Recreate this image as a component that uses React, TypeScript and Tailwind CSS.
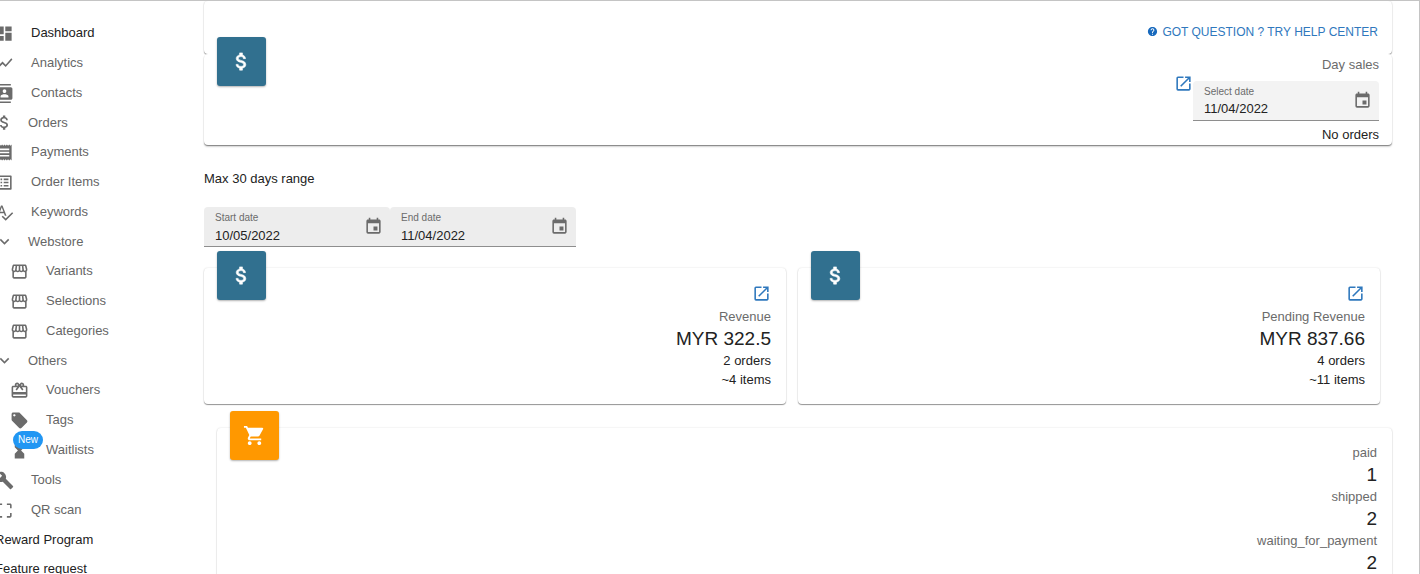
import { useState } from 'react'
import type { ReactNode } from 'react'
import type { IconType } from 'react-icons'
import {
  MdAttachMoney,
  MdBuild,
  MdCardGiftcard,
  MdContacts,
  MdCropFree,
  MdDashboard,
  MdEvent,
  MdExpandMore,
  MdHelp,
  MdHourglassFull,
  MdLaunch,
  MdListAlt,
  MdLocalOffer,
  MdOutlineStorefront,
  MdReceipt,
  MdShoppingCart,
  MdShowChart,
  MdSpellcheck
} from 'react-icons/md'

interface NavItem {
  label: string
  icon?: IconType
  kind?: 'group' | 'child' | 'text'
  active?: boolean
  badge?: string
}

const NAV_ITEMS: NavItem[] = [
  { label: 'Dashboard', icon: MdDashboard, active: true },
  { label: 'Analytics', icon: MdShowChart },
  { label: 'Contacts', icon: MdContacts },
  { label: 'Orders', icon: MdAttachMoney, kind: 'group' },
  { label: 'Payments', icon: MdReceipt },
  { label: 'Order Items', icon: MdListAlt },
  { label: 'Keywords', icon: MdSpellcheck },
  { label: 'Webstore', icon: MdExpandMore, kind: 'group' },
  { label: 'Variants', icon: MdOutlineStorefront, kind: 'child' },
  { label: 'Selections', icon: MdOutlineStorefront, kind: 'child' },
  { label: 'Categories', icon: MdOutlineStorefront, kind: 'child' },
  { label: 'Others', icon: MdExpandMore, kind: 'group' },
  { label: 'Vouchers', icon: MdCardGiftcard, kind: 'child' },
  { label: 'Tags', icon: MdLocalOffer, kind: 'child' },
  { label: 'Waitlists', icon: MdHourglassFull, kind: 'child', badge: 'New' },
  { label: 'Tools', icon: MdBuild },
  { label: 'QR scan', icon: MdCropFree },
  { label: 'Reward Program', kind: 'text' },
  { label: 'Feature request', kind: 'text' }
]

const ORDER_STATUS = [
  { label: 'paid', count: 1 },
  { label: 'shipped', count: 2 },
  { label: 'waiting_for_payment', count: 2 }
]

const ROW_STYLES = {
  item: 'h-[30px] gap-[17px] text-[#666]',
  group: 'h-[29px] gap-[14px] text-[#666]',
  child: 'h-[30px] gap-[17px] pl-[15px] text-[#666]',
  text: 'h-[29px] text-[#222]'
}

const CARD = 'rounded bg-white shadow-[0_1px_1px_rgba(0,0,0,0.4),0_0_2px_rgba(0,0,0,0.14)]'
// sits right under the help bar, so it casts nothing upwards
const CARD_JOINED = 'rounded bg-white shadow-[0_1px_1px_rgba(0,0,0,0.4),0_2px_2px_rgba(0,0,0,0.14)]'

function NavRow({ item }: { item: NavItem }) {
  const Icon = item.icon
  return (
    <li>
      <a href="#" className={`flex items-center ${ROW_STYLES[item.kind ?? 'item']}`}>
        {Icon && (
          <span className="relative shrink-0">
            <Icon className="size-[19px] text-[#6b6b6b]" />
            {item.badge && (
              <span className="absolute -top-[10px] left-[3px] rounded-full bg-[#2196f3] px-[5px] text-[10px] leading-[18px] text-white">
                {item.badge}
              </span>
            )}
          </span>
        )}
        <span className={item.active ? 'text-[#222]' : ''}>{item.label}</span>
      </a>
    </li>
  )
}

function IconTile({ icon: Icon, className }: { icon: IconType; className: string }) {
  return (
    <div
      className={`-mt-[17px] ml-[13px] flex size-[49px] shrink-0 items-center justify-center rounded-[3px] text-white shadow-[0_1px_2px_rgba(0,0,0,0.3)] ${className}`}
    >
      <Icon className="size-[23px]" />
    </div>
  )
}

function DollarTile() {
  return (
    <IconTile
      icon={MdAttachMoney}
      className="bg-[#31708f] [&_path:last-child]:stroke-white [&_path:last-child]:stroke-[0.6px]"
    />
  )
}

function OpenButton({ label }: { label: string }) {
  return (
    <button type="button" aria-label={label} className="block text-[#2f78bd]">
      <MdLaunch className="size-[19px]" />
    </button>
  )
}

interface DateFieldProps {
  id: string
  label: string
  initial: string
  className: string
}

function DateField({ id, label, initial, className }: DateFieldProps) {
  const [value, setValue] = useState(initial)
  return (
    <div
      className={`flex h-10 w-[186px] items-center rounded-t border-b border-[#8e8e8e] pr-[7px] pl-[11px] text-left ${className}`}
    >
      <div className="min-w-0 flex-1 pt-1">
        <label htmlFor={id} className="block text-[10px] leading-3 text-[#6b6b6b]">
          {label}
        </label>
        <input
          id={id}
          type="text"
          value={value}
          onChange={(e) => setValue(e.target.value)}
          className="mt-px block h-5 w-full bg-transparent text-[13px] text-[#222] outline-none"
        />
      </div>
      <button type="button" aria-label={`Choose ${label.toLowerCase()}`} className="text-[#6b6b6b]">
        <MdEvent className="size-[19px]" />
      </button>
    </div>
  )
}

interface RevenueCardProps {
  title: string
  amount: string
  children: ReactNode
}

function RevenueCard({ title, amount, children }: RevenueCardProps) {
  return (
    <section className={`flex justify-between ${CARD}`}>
      <DollarTile />
      <div className="flex flex-col items-end pt-4 pr-[15px] pb-[15px] text-right">
        <OpenButton label={`Open ${title}`} />
        <h2 className="mt-1 leading-5 text-[#6b6b6b]">{title}</h2>
        <p className="text-[19px] leading-6">{amount}</p>
        {children}
      </div>
    </section>
  )
}

export default function App() {
  return (
    <div className="flex h-screen overflow-hidden border-t border-r border-[#c4c4c4] bg-white font-['Liberation_Sans',Arial,sans-serif] text-[13px] text-[#222]">
      <nav className="-ml-[5px] w-[209px] shrink-0 pt-[17px]">
        <ul>
          {NAV_ITEMS.map((item) => (
            <NavRow key={item.label} item={item} />
          ))}
        </ul>
      </nav>

      <main className="min-w-0 flex-1 pr-[27px]">
        <div className={`flex h-[53px] items-center justify-end pt-2 pr-[14px] ${CARD}`}>
          <a href="#" className="flex items-center gap-1 text-[12px] text-[#2f78bd]">
            <MdHelp className="size-[11px] text-[#1769bd]" />
            GOT QUESTION ? TRY HELP CENTER
          </a>
        </div>

        <section className={`flex justify-between ${CARD_JOINED}`}>
          <DollarTile />
          <div className="pr-[13px] text-right leading-5">
            <h2 className="pt-[2px] leading-[18px] text-[#6b6b6b]">Day sales</h2>
            <div className="flex items-start">
              <OpenButton label="Open day sales" />
              <div className="pt-[7px]">
                <DateField id="day" label="Select date" initial="11/04/2022" className="bg-[#f3f3f3]" />
              </div>
            </div>
            <p className="mt-1">No orders</p>
          </div>
        </section>

        <p className="mt-6 leading-5">Max 30 days range</p>
        <div className="mt-[18px] flex">
          <DateField id="start" label="Start date" initial="10/05/2022" className="bg-[#ededed]" />
          <DateField id="end" label="End date" initial="11/04/2022" className="bg-[#ededed]" />
        </div>

        <div className="mt-[21px] grid grid-cols-2 gap-3 pr-3">
          <RevenueCard title="Revenue" amount="MYR 322.5">
            <p className="leading-[19px]">2 orders</p>
            <p className="leading-[19px]">~4 items</p>
          </RevenueCard>
          <RevenueCard title="Pending Revenue" amount="MYR 837.66">
            <p className="leading-[19px]">4 orders</p>
            <p className="leading-[19px]">~11 items</p>
          </RevenueCard>
        </div>

        <section className={`mt-6 ml-[13px] flex justify-between ${CARD}`}>
          <IconTile icon={MdShoppingCart} className="bg-[#ff9800]" />
          <dl className="pt-[14px] pr-[15px] pb-4 text-right leading-[22px]">
            {ORDER_STATUS.map((status) => (
              <div key={status.label}>
                <dt className="text-[#6b6b6b]">{status.label}</dt>
                <dd className="text-[19px]">{status.count}</dd>
              </div>
            ))}
          </dl>
        </section>
      </main>
    </div>
  )
}
